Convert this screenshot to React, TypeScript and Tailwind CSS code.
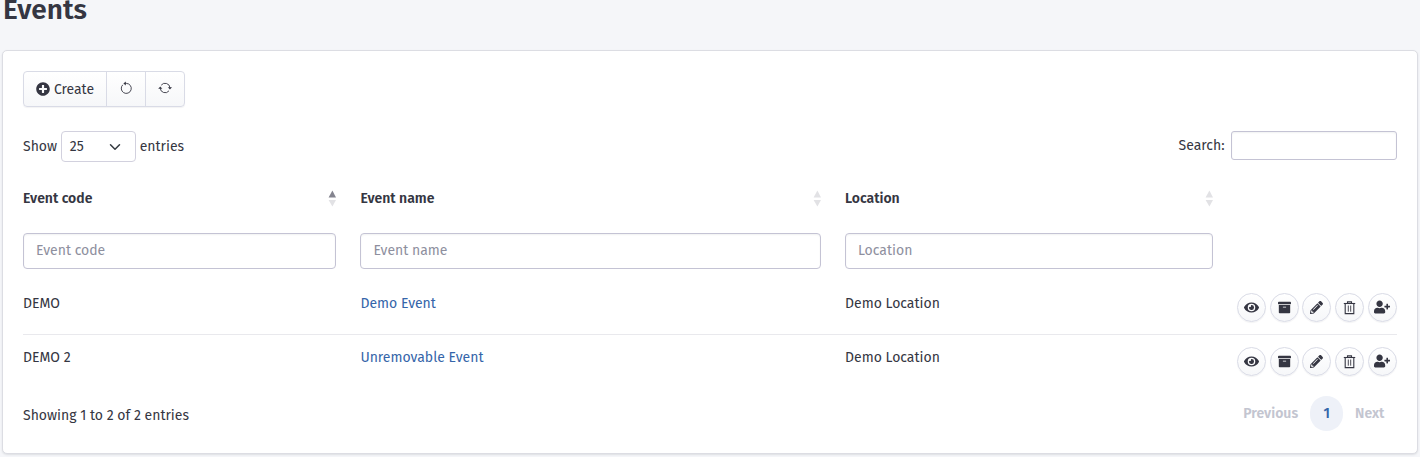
import type { ReactNode } from "react";
import { FaPlusCircle, FaEye, FaArchive, FaPencilAlt, FaUserPlus } from "react-icons/fa";

const columns = [
  { label: "Event code", sorted: true, width: "w-[313.4px]" },
  { label: "Event name", sorted: false, width: "w-[460.6px]" },
  { label: "Location", sorted: false, width: "w-[368px]" },
];

const events = [
  { code: "DEMO", name: "Demo Event", location: "Demo Location" },
  { code: "DEMO 2", name: "Unremovable Event", location: "Demo Location" },
];

function UndoIcon() {
  return (
    <svg width="14" height="14" viewBox="0 0 14 14" fill="none" stroke="currentColor" strokeWidth="0.9" className="mb-[2px]">
      <path d="M3.8 3.8A5 5 0 1 0 7.4 2.4H5.8" />
      <path d="M6.8 0.4L4.4 2.4L6.8 4.4Z" fill="currentColor" stroke="none" />
    </svg>
  );
}

function RefreshIcon() {
  return (
    <svg width="14" height="14" viewBox="0 0 14 14" fill="none" stroke="currentColor" strokeWidth="0.9" className="mb-[2px]">
      <path d="M3.2 4.2A4.9 4.9 0 0 1 12 7" />
      <path d="M11 9.8A4.9 4.9 0 0 1 2.2 7" />
      <path d="M9.9 6.3H14L11.9 8.6Z" fill="currentColor" stroke="none" />
      <path d="M0.2 7.7H4.3L2.3 5.4Z" fill="currentColor" stroke="none" />
    </svg>
  );
}

function TrashIcon() {
  return (
    <svg width="13" height="15" viewBox="0 0 13 15" fill="none" stroke="currentColor" className="mb-px">
      <path d="M0.8 3.5H12.2" strokeWidth="1.1" />
      <path d="M4.5 3.2V1.9H8.5V3.2" strokeWidth="1.1" />
      <path d="M2.2 3.5V13.6H10.8V3.5" strokeWidth="1.1" />
      <path d="M5.3 5.5V11.7M7.7 5.5V11.7" strokeWidth="0.9" />
    </svg>
  );
}

function SortIcon({ active }: { active: boolean }) {
  return (
    <svg width="8" height="17" viewBox="0 0 8 17" className="shrink-0">
      <path d="M4.4 0.6L8 7.6H0.6Z" fill={active ? "#84848f" : "#e2e2e5"} />
      <path d="M0.6 10H8L4.4 16.6Z" fill="#e2e2e5" />
    </svg>
  );
}

function RoundButton({ children }: { children: ReactNode }) {
  return (
    <button className="flex size-[29px] items-center justify-center rounded-full border border-[#d9dbe6] bg-linear-to-b from-white to-[#f6f7f9] text-[15px] shadow-[0_1px_1px_rgba(22,29,37,0.05)]">
      {children}
    </button>
  );
}

export default function App() {
  return (
    <div className="h-[457px] overflow-hidden bg-[#f5f6f9] pr-[2px] pl-[2px] font-['Fira_Sans','Noto_Sans',sans-serif] text-[14px] leading-[21px] text-[#353642]">
      <h1 className="-mt-[8px] h-[58px] pl-[1px] text-[28px] leading-[35px] font-semibold">Events</h1>
      <main className="h-[404px] rounded-[5px] border border-[#dcdde3] bg-white px-[20px] pt-[20px] shadow-[0_1px_2px_rgba(22,29,37,0.1)]">
        <div className="flex h-[36px] w-[162px] rounded-[4px] border border-[#d9dbe6] bg-linear-to-b from-white to-[#f6f7f9] shadow-[0_1px_1px_rgba(22,29,37,0.05)]">
          <button className="flex w-[83px] items-center justify-center gap-[4px] border-r border-[#d9dbe6]">
            <FaPlusCircle />
            <span>Create</span>
          </button>
          <button className="flex w-[39px] items-center justify-center border-r border-[#d9dbe6]">
            <UndoIcon />
          </button>
          <button className="flex flex-1 items-center justify-center">
            <RefreshIcon />
          </button>
        </div>

        <div className="mt-[24px] flex h-[31px] items-start justify-between">
          <div className="flex items-center gap-[3.8px]">
            <span>Show</span>
            <div className="flex h-[31px] w-[75px] items-center justify-between rounded-[4px] border border-[#d2d1de] pr-[14px] pl-[8px]">
              <span>25</span>
              <svg width="12" height="12" viewBox="0 0 16 16" fill="none" stroke="#343a40" strokeWidth="2" strokeLinecap="round" strokeLinejoin="round">
                <path d="M2 5l6 6 6-6" />
              </svg>
            </div>
            <span>entries</span>
          </div>
          <label className="flex h-[29px] items-center gap-[6.5px]">
            <span>Search:</span>
            <input className="h-[29px] w-[166px] rounded-[3px] border border-[#c4c3d4] bg-white shadow-[inset_0_1px_2px_rgba(22,29,37,0.06)] outline-none" />
          </label>
        </div>

        <div className="mt-[26px] flex gap-[24px]">
          {columns.map((c) => (
            <div key={c.label} className={`${c.width} flex h-[21px] items-center justify-between font-semibold`}>
              <span>{c.label}</span>
              <SortIcon active={c.sorted} />
            </div>
          ))}
        </div>
        <div className="mt-[24px] flex gap-[24px]">
          {columns.map((c) => (
            <input
              key={c.label}
              placeholder={c.label}
              className={`${c.width} h-[36px] rounded-[4px] border border-[#c4c3d4] bg-white px-[12px] pb-[2px] shadow-[inset_0_1px_2px_rgba(22,29,37,0.06)] outline-none placeholder:text-[#8e8f9e]`}
            />
          ))}
        </div>

        <div className="mt-[12px]">
          {events.map((e, i) => (
            <div key={e.code} className={`flex h-[54px] gap-[24px] pt-[12px] ${i === 0 ? "border-b border-[#e9e9ed]" : ""}`}>
              <span className="w-[313.4px]">{e.code}</span>
              <a className="w-[460.6px] text-[#3565a9]">{e.name}</a>
              <span className="w-[368px]">{e.location}</span>
              <div className="flex w-[160px] gap-[3.7px]">
                <RoundButton><FaEye /></RoundButton>
                <RoundButton><FaArchive className="text-[13px]" /></RoundButton>
                <RoundButton><FaPencilAlt className="text-[13px]" /></RoundButton>
                <RoundButton><TrashIcon /></RoundButton>
                <RoundButton><FaUserPlus className="mb-px text-[16px]" /></RoundButton>
              </div>
            </div>
          ))}
        </div>

        <div className="mt-[7px] flex h-[35px] items-center justify-between">
          <span className="pt-[4px]">Showing 1 to 2 of 2 entries</span>
          <nav className="flex items-center gap-[12px] pr-[12.6px] font-semibold text-[#c3c5d0]">
            <span>Previous</span>
            <span className="flex h-[35px] w-[33px] items-center justify-center rounded-full bg-[#eef1f8] text-[#3565a9]">1</span>
            <span>Next</span>
          </nav>
        </div>
      </main>
    </div>
  );
}
